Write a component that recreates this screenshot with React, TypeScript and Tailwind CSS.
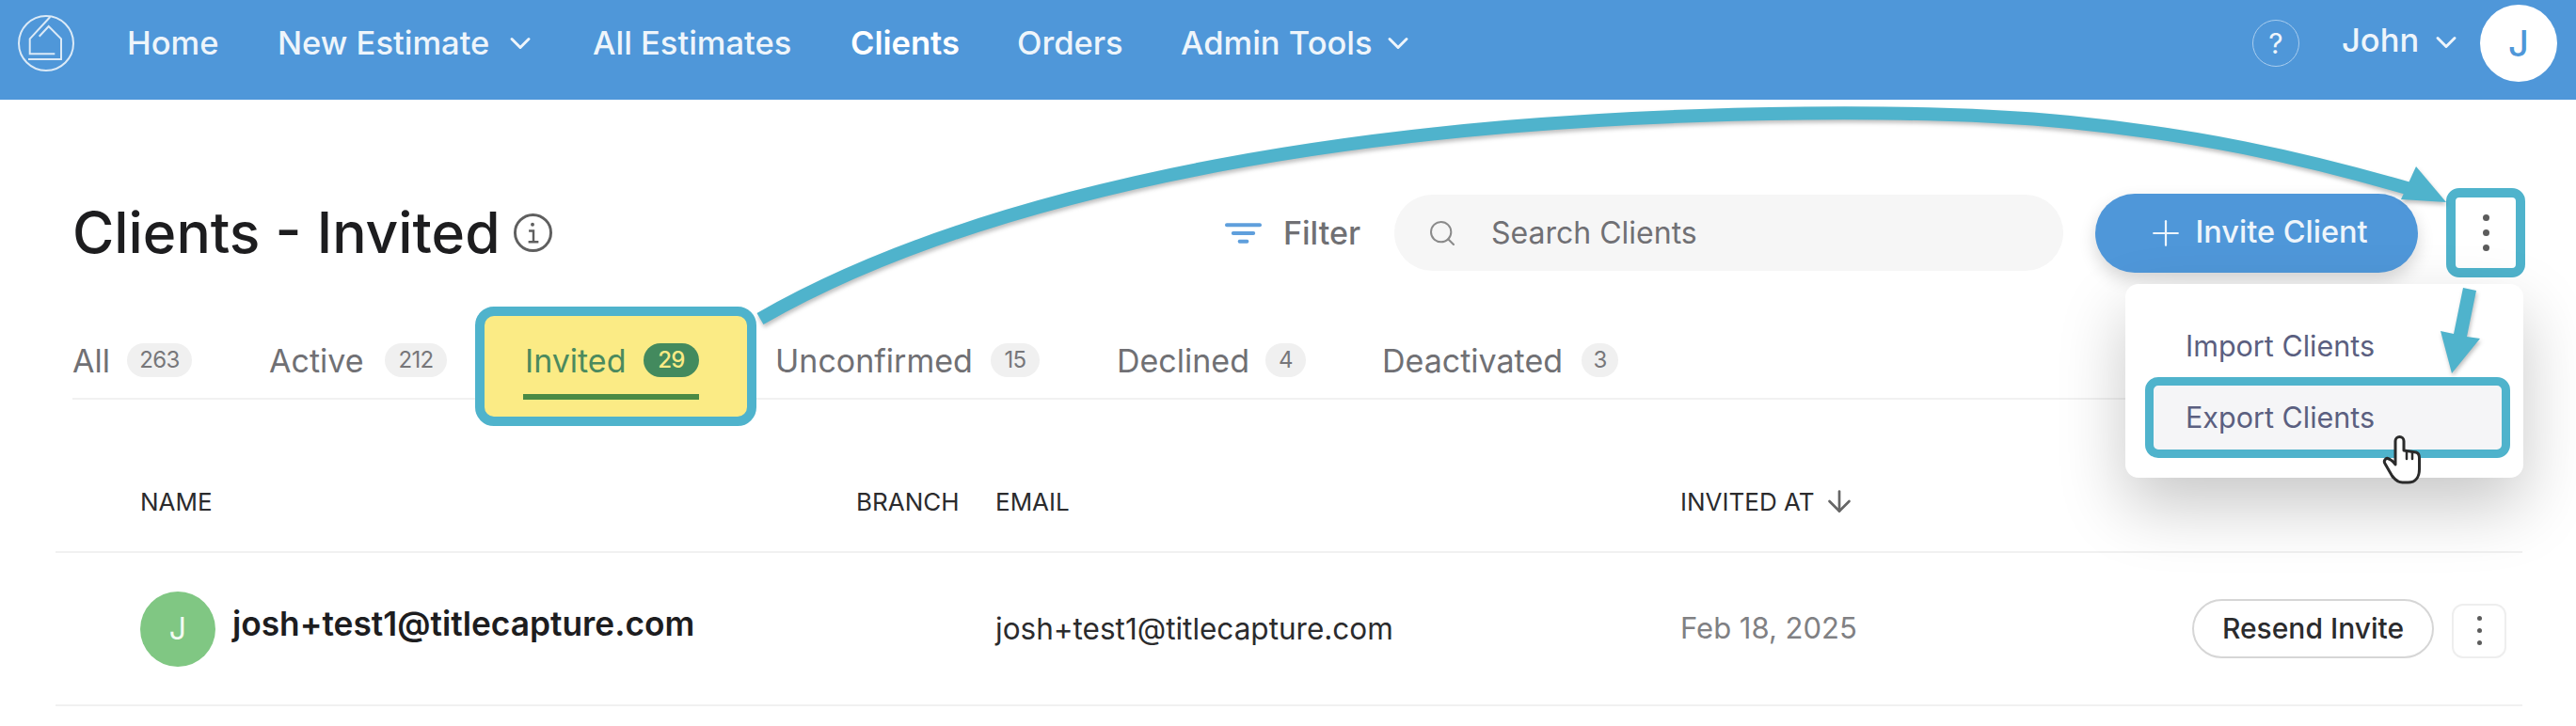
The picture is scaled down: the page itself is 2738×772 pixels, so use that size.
import { ChevronDown, Plus, Search, ArrowDown } from 'lucide-react';

const tabs = [
  { label: 'All', count: '263', labelW: 'w-[38px]', badgeW: 'w-[69px]', gap: 'ml-0' },
  { label: 'Active', count: '212', labelW: 'w-[103px]', badgeW: 'w-[66px]', gap: 'ml-[82px]' },
];

const restTabs = [
  { label: 'Unconfirmed', count: '15', labelW: 'w-[209px]', badgeW: 'w-[52px]', gap: 'ml-[20px]' },
  { label: 'Declined', count: '4', labelW: 'w-[138px]', badgeW: 'w-[43px]', gap: 'ml-[82px]' },
  { label: 'Deactivated', count: '3', labelW: 'w-[192px]', badgeW: 'w-[39px]', gap: 'ml-[81px]' },
];

function Logo() {
  return (
    <svg viewBox="0 0 60 60" className="w-[60px] h-[60px] shrink-0" fill="none" stroke="#dbeaf7" strokeWidth="2">
      <circle cx="30" cy="30" r="29" />
      <path d="M39.3 41.3H12.7V25.3L34.3 2" />
      <path d="M22.7 22.7L32.7 12L46 25.3V47H11" />
    </svg>
  );
}

function Hand() {
  return (
    <svg viewBox="0 0 70 66" className="absolute left-[261px] top-[153px] w-[70px] h-[66px]" fill="#fff" stroke="#2b2b2b" strokeWidth="3" strokeLinejoin="round" strokeLinecap="round">
      <path d="M26 34V14a4.5 4.5 0 0 1 9 0V24l13 2c3 1 3.500 3 3.500 6V44c0 8-4 14-12 14h-6c-5 0-8-3-11-7L15 38c-2-3 1-7 4-5c3 1 5 3 7 6Z" />
      <path d="M38 25V33M44 26V33" fill="none" strokeWidth="2.500" />
    </svg>
  );
}

function Badge({ count, width }: { count: string; width: string }) {
  return (
    <span className={`${width} h-[36px] ml-[20px] rounded-full bg-[#f0f0f0] text-[#77777a] text-[24px] tracking-tight flex items-center justify-center`}>
      {count}
    </span>
  );
}

function Tab({ label, count, labelW, badgeW, gap }: { label: string; count: string; labelW: string; badgeW: string; gap: string }) {
  return (
    <div className={`${gap} mt-[39px] h-[36px] flex items-center`}>
      <span className={`${labelW} text-[34px] text-[#707074] whitespace-nowrap`}>{label}</span>
      <Badge count={count} width={badgeW} />
    </div>
  );
}

function Dots({ size, gap }: { size: string; gap: string }) {
  return (
    <span className={`flex flex-col items-center ${gap}`}>
      <span className={`${size} rounded-full bg-[#5c5c5c]`} />
      <span className={`${size} rounded-full bg-[#5c5c5c]`} />
      <span className={`${size} rounded-full bg-[#5c5c5c]`} />
    </span>
  );
}

export default function App() {
  return (
    <div className="relative w-[2738px] h-[772px] overflow-hidden bg-white font-['Inter',sans-serif]">
      {/* Nav */}
      <nav className="h-[106px] bg-[#4f97d9] flex items-center pl-[19px] pr-[20px] pb-[14px] text-[#eef5fb] text-[34.500px] font-medium">
        <Logo />
        <span className="ml-[56px] w-[97px]">Home</span>
        <span className="ml-[63px] w-[225px] whitespace-nowrap">New Estimate</span>
        <ChevronDown className="ml-[15px] w-[36px] h-[36px]" strokeWidth={2} />
        <span className="ml-[59px] w-[210px] whitespace-nowrap">All Estimates</span>
        <span className="ml-[64px] w-[114px] font-semibold text-white">Clients</span>
        <span className="ml-[63px] w-[112px]">Orders</span>
        <span className="ml-[62px] w-[200px] whitespace-nowrap">Admin Tools</span>
        <ChevronDown className="ml-[13px] w-[36px] h-[36px]" strokeWidth={2} />
        <div className="ml-auto flex items-center">
          <span className="w-[50px] h-[50px] rounded-full border border-[#a9cdee] flex items-center justify-center text-[30px] font-normal">?</span>
          <span className="ml-[45px] w-[79px] -mt-[6px]">John</span>
          <ChevronDown className="ml-[14px] w-[36px] h-[36px] -mt-[2px]" strokeWidth={2} />
          <span className="ml-[18px] w-[82px] h-[82px] rounded-full bg-white text-[#4f97d9] flex items-center justify-center text-[38px]">J</span>
        </div>
      </nav>

      {/* Page header */}
      <div className="mt-[94px] h-[95px] flex items-center pl-[77px] pr-[54px]">
        <h1 className="text-[60.500px] font-medium text-[#1d1d1f] whitespace-nowrap leading-none w-[450px]">Clients - Invited</h1>
        <svg viewBox="0 0 44 44" className="ml-[18px] w-[43px] h-[43px] text-[#5f5f5f]" fill="none" stroke="currentColor" strokeWidth="3">
          <circle cx="22" cy="22" r="19.500" />
          <circle cx="21.500" cy="13" r="2" fill="currentColor" stroke="none" />
          <path d="M17.500 20H22.500V31M17 32H28" strokeWidth="2.500" />
        </svg>
        <div className="ml-auto flex items-center">
          <svg viewBox="0 0 40 22" className="w-[39px] h-[22px]" fill="#5f9fdc">
            <rect x="0" y="0" width="40" height="4" rx="2" />
            <rect x="7" y="9" width="26" height="4" rx="2" />
            <rect x="14" y="18" width="12" height="4" rx="2" />
          </svg>
          <span className="ml-[23px] w-[80px] text-[34px] text-[#707074] font-medium">Filter</span>
          <div className="ml-[38px] w-[711px] h-[81px] rounded-full bg-[#f6f6f6] flex items-center pl-[35px]">
            <Search className="w-[32px] h-[32px] text-[#8a8a8a]" strokeWidth={1.5} />
            <span className="ml-[36px] text-[32px] text-[#707074] whitespace-nowrap">Search Clients</span>
          </div>
          <button className="ml-[34px] w-[343px] h-[84px] rounded-full bg-[#4f97d9] text-[#eef5fb] text-[32.500px] font-medium flex items-center justify-center gap-[9px] whitespace-nowrap shadow-[0_8px_18px_rgba(0,0,0,0.16)]">
            <Plus className="w-[44px] h-[44px]" strokeWidth={1.2} />
            Invite Client
          </button>
          <div className="relative ml-[30px] w-[84px] h-[95px] rounded-[14px] border-[10px] border-[#4fb3cc] bg-white flex items-center justify-center">
            <Dots size="w-[7px] h-[7px]" gap="gap-[9px]" />
            {/* Actions menu */}
            <div className="absolute right-[-8px] top-[92px] w-[423px] h-[206px] rounded-[14px] bg-white pl-[21px] pr-[14px] pt-[33px] shadow-[0_30px_70px_rgba(0,0,0,0.22)] z-20 text-[30.500px] text-[#5b5f80] whitespace-nowrap">
              <div className="h-[66px] flex items-center pl-[43px]">Import Clients</div>
              <div className="h-[86px] rounded-[14px] border-[9px] border-[#4fb3cc] bg-[#f5f5f7] flex items-center pl-[34px]">Export Clients</div>
              <Hand />
            </div>
          </div>
        </div>
      </div>

      {/* Tabs */}
      <div className="mt-[31px] ml-[77px] mr-[56px] h-[99px] border-b-2 border-[#f1f1f1] flex items-start">
        {tabs.map((t) => (
          <Tab key={t.label} {...t} />
        ))}
        <div className="ml-[30px] relative z-10 w-[299px] h-[127px] shrink-0 rounded-[20px] border-[10px] border-[#4fb3cc] bg-[#fbeb85] pl-[43px] pr-[51px]">
          <div className="h-[36px] mt-[29px] flex items-center">
            <span className="w-[108px] text-[34px] text-[#4b8a5e] whitespace-nowrap">Invited</span>
            <span className="ml-[18px] w-[59px] h-[36px] rounded-full bg-[#438a5e] text-[#fbeb85] text-[24px] font-medium tracking-tight flex items-center justify-center">29</span>
          </div>
          <div className="h-[6px] mt-[18px] -ml-[2px] bg-[#4a8a44]" />
        </div>
        {restTabs.map((t) => (
          <Tab key={t.label} {...t} />
        ))}
      </div>

      {/* Table */}
      <div className="mt-[53px] ml-[59px] mr-[57px]">
        <div className="h-[110px] pt-[2px] border-b-2 border-[#f1f1f1] grid grid-cols-[761px_148px_728px_1fr] items-center pl-[90px] text-[26px] text-[#2b2b2d]">
          <span>NAME</span>
          <span>BRANCH</span>
          <span>EMAIL</span>
          <span className="flex items-center gap-[8px] whitespace-nowrap">
            INVITED AT
            <ArrowDown className="w-[36px] h-[36px] text-[#666]" strokeWidth={1.8} />
          </span>
        </div>
        <div className="h-[163px] border-b-2 border-[#f1f1f1] grid grid-cols-[761px_148px_728px_1fr] items-center pl-[90px]">
          <div className="flex items-center">
            <span className="w-[80px] h-[80px] rounded-full bg-[#80c783] text-[#f3fbf3] text-[32px] flex items-center justify-center">J</span>
            <span className="ml-[18px] pb-[9px] text-[35.300px] font-semibold text-[#1d1d1f] whitespace-nowrap">josh+test1@titlecapture.com</span>
          </div>
          <span />
          <span className="text-[31.500px] text-[#2b2b2d] whitespace-nowrap">josh+test1@titlecapture.com</span>
          <div className="flex items-center">
            <span className="text-[31px] text-[#808083] whitespace-nowrap">Feb 18, 2025</span>
            <div className="ml-auto flex items-center pr-[17px]">
              <button className="w-[257px] h-[63px] rounded-full border-2 border-[#d6d6d6] text-[30px] font-medium text-[#2b2b2d] whitespace-nowrap">Resend Invite</button>
              <button className="ml-[19px] mt-[4px] w-[58px] h-[58px] rounded-[12px] border-2 border-[#eeeeee] flex items-center justify-center">
                <Dots size="w-[5px] h-[5px]" gap="gap-[8px]" />
              </button>
            </div>
          </div>
        </div>
      </div>

      {/* Callout arrows */}
      <svg viewBox="0 0 2738 772" className="absolute inset-0 w-[2738px] h-[772px] pointer-events-none z-30 drop-shadow-[1px_3px_2px_rgba(0,0,0,0.25)]">
        <path d="M808 339C980 240 1250 165 1600 135C1800 118 2050 115 2200 130C2330 143 2440 165 2572 204" fill="none" stroke="#4fb3cc" strokeWidth="14" />
        <path d="M2600 215L2568 177L2552 212Z" fill="#4fb3cc" />
        <path d="M2618 306L2632 309L2622 358L2636 360L2606 397L2594 352L2608 355Z" fill="#4fb3cc" />
      </svg>
    </div>
  );
}
